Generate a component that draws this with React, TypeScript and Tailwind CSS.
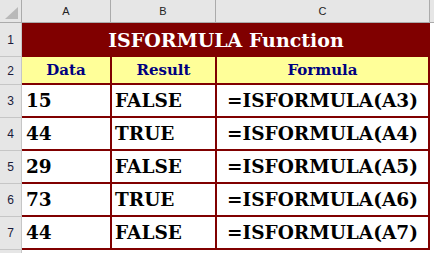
const rows = [
  { n: 3, data: "15", result: "FALSE" },
  { n: 4, data: "44", result: "TRUE" },
  { n: 5, data: "29", result: "FALSE" },
  { n: 6, data: "73", result: "TRUE" },
  { n: 7, data: "44", result: "FALSE" },
];

function RowHead({ n, h }: { n?: number; h: string }) {
  return (
    <div
      className={`${h} flex items-center justify-center border-b border-r border-[#c6c6c6] bg-[#e6e6e6] font-['Liberation_Sans',sans-serif] text-[12px] text-[#1a1a3a]`}
    >
      {n}
    </div>
  );
}

export default function App() {
  return (
    <div className="h-[253px] w-[434px] overflow-hidden bg-white">
      {/* column letters */}
      <div className="flex h-[23px] bg-[#e6e6e6] font-['Liberation_Sans',sans-serif] text-[11px] text-[#222]">
        <div className="relative w-[22px] border-b border-r border-[#ababab]">
          <svg className="absolute left-[5px] top-[7px]" width="13" height="12" viewBox="0 0 13 12">
            <polygon points="13,0 13,12 0,12" fill="#b9b9b9" />
          </svg>
        </div>
        <div className="flex w-[89px] items-center justify-center border-b border-r border-[#ababab]">A</div>
        <div className="flex w-[105px] items-center justify-center border-b border-r border-[#ababab]">B</div>
        <div className="flex w-[214px] items-center justify-center border-b border-r border-[#ababab]">C</div>
        <div className="flex-1 border-b border-[#ababab]" />
      </div>

      <div className="flex">
        {/* row numbers */}
        <div className="flex w-[22px] flex-col">
          <RowHead n={1} h="h-[34px]" />
          <RowHead n={2} h="h-[28px]" />
          {rows.map((r) => (
            <RowHead key={r.n} n={r.n} h="h-[33px]" />
          ))}
          <RowHead h="h-[10px]" />
        </div>

        {/* sheet */}
        <div className="flex w-[408px] flex-col font-['DejaVu_Serif',serif] font-bold">
          <div className="flex h-[34px] items-center justify-center bg-[#800000] text-[19px] text-white">
            ISFORMULA Function
          </div>
          <div className="grid h-[28px] grid-cols-[90px_105px_213px] border-b-2 border-[#800000] bg-[#ffff99] text-[15px] text-[#000080]">
            <div className="flex items-center justify-center border-r-2 border-[#800000]">Data</div>
            <div className="flex items-center justify-center border-r-2 border-[#800000]">Result</div>
            <div className="flex items-center justify-center border-r-2 border-[#800000]">Formula</div>
          </div>
          {rows.map((r) => (
            <div
              key={r.n}
              className="grid h-[33px] grid-cols-[90px_105px_213px] border-b-2 border-[#800000] text-[18.5px] text-black"
            >
              <div className="flex items-center border-r-2 border-[#800000] pl-[4px]">{r.data}</div>
              <div className="flex items-center border-r-2 border-[#800000] pl-[3px]">{r.result}</div>
              <div className="flex items-center justify-center border-r-2 border-[#800000]">
                =ISFORMULA(A{r.n})
              </div>
            </div>
          ))}
        </div>
      </div>
    </div>
  );
}
